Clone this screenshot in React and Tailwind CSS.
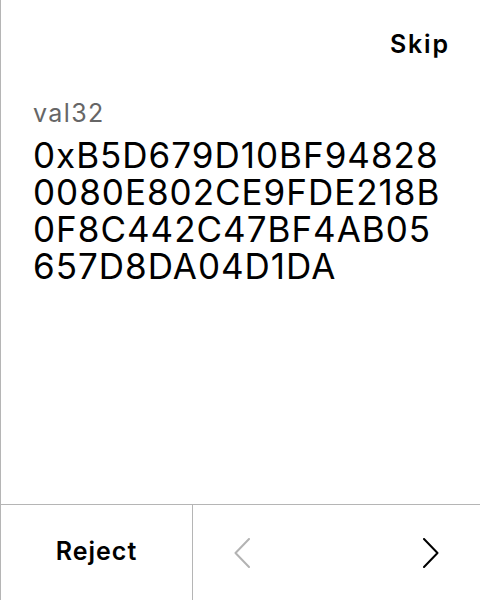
import React from "react";

const font = { fontFamily: "Inter, 'Noto Sans', sans-serif" };

const lines = ["0xB5D679D10BF94828", "0080E802CE9FDE218B", "0F8C442C47BF4AB05", "657D8DA04D1DA"];

function Chevron({ dir = "right", className = "" }) {
  const d = dir === "left" ? "M15 1 L1.5 15 L15 29" : "M1 1 L14.5 15 L1 29";
  return (
    <svg width="16" height="30" viewBox="0 0 16 30" fill="none" className={className}>
      <path d={d} stroke="currentColor" strokeWidth="2" strokeLinecap="round" strokeLinejoin="round" />
    </svg>
  );
}

export default function App() {
  return (
    <div className="w-[480px] h-[600px] bg-white border-l border-[#b5b5b5] flex flex-col text-black" style={font}>
      <div className="flex justify-end pt-[28px] pr-[32px]">
        <button className="text-[25px] font-semibold leading-[32px] tracking-[1.8px] -mr-[1.8px]">Skip</button>
      </div>

      <div className="flex-1 px-[32px] pt-[38px]">
        <div className="text-[25px] leading-[30px] text-[#666666] tracking-[1.4px]">val32</div>
        <div className="text-[35px] leading-[37px] mt-[9px] tracking-[1px]">
          {lines.map((l) => (
            <div key={l} className="h-[37px]">{l}</div>
          ))}
        </div>
      </div>

      <div className="h-[96px] border-t border-[#b5b5b5] flex">
        <button className="w-[192px] flex items-center justify-center text-[25px] font-semibold tracking-[1px] pb-[2px] border-r border-[#b5b5b5]">
          Reject
        </button>
        <div className="flex-1 flex items-center justify-between px-[41px]">
          <Chevron dir="left" className="text-[#b3b3b3]" />
          <Chevron dir="right" className="text-black" />
        </div>
      </div>
    </div>
  );
}
